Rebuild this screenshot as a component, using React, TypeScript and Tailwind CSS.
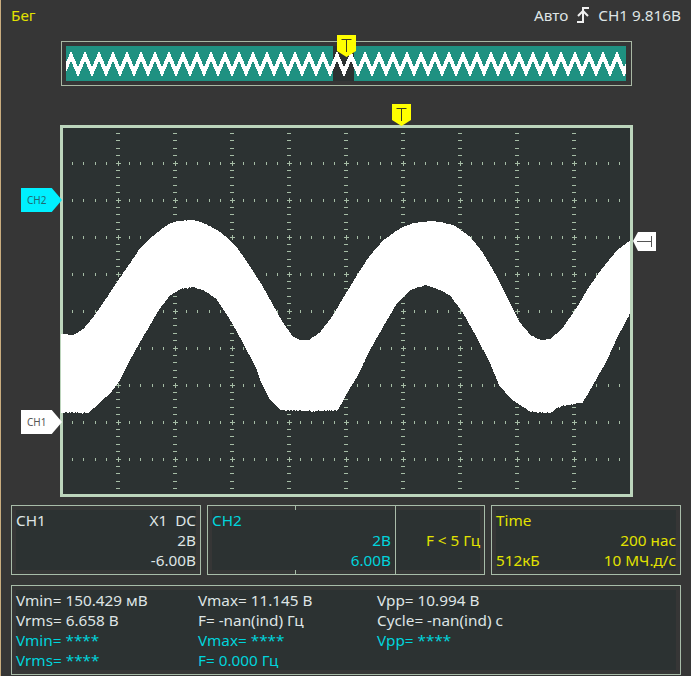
const FONT = "font-['Noto_Sans','Open_Sans',sans-serif]";

const UPPER: [number, number][] = [
  [61, 334], [73, 335], [83, 329], [93, 317], [103, 303], [113, 288], [123, 273], [132, 260], [140, 248], [150, 238],
  [160, 230], [170, 223], [177, 221], [193, 220], [203, 223], [217, 230], [227, 238], [237, 248], [247, 262], [263, 287],
  [273, 305], [283, 323], [293, 337], [300, 340], [308, 340], [320, 332], [333, 315], [343, 298], [357, 275], [370, 255],
  [383, 240], [400, 228], [413, 223], [430, 221], [440, 222], [453, 225], [470, 237], [483, 253], [497, 277], [507, 297],
  [520, 323], [530, 335], [540, 340], [550, 339], [563, 327], [577, 307], [590, 285], [603, 267], [617, 250], [630, 240],
];

const LOWER: [number, number][] = [
  [61, 413], [88, 413], [97, 405], [110, 393], [120, 380], [130, 360], [140, 342], [150, 325], [160, 308], [170, 295],
  [180, 289], [192, 287], [203, 290], [217, 300], [230, 320], [243, 343], [257, 370], [260, 380], [270, 400], [280, 410],
  [310, 411], [338, 410], [347, 393], [357, 377], [370, 350], [383, 327], [397, 303], [410, 290], [425, 285], [440, 290],
  [450, 296], [463, 313], [477, 338], [490, 363], [500, 387], [512, 400], [530, 412], [550, 413], [558, 407], [583, 402],
  [593, 385], [607, 360], [620, 332], [630, 314],
];

function interp(points: [number, number][], x: number) {
  for (let i = 1; i < points.length; i++) {
    if (x <= points[i][0]) {
      const [x0, y0] = points[i - 1];
      const [x1, y1] = points[i];
      return y0 + ((y1 - y0) * (x - x0)) / (x1 - x0);
    }
  }
  return points[points.length - 1][1];
}

function noise(x: number) {
  const v = Math.sin(x * 12.9898) * 43758.5453;
  return v - Math.floor(v) - 0.5;
}

function wavePoints() {
  const top: string[] = [];
  const bottom: string[] = [];
  for (let x = 61; x <= 630; x++) {
    const low = interp(LOWER, x);
    const flat = Math.abs(interp(LOWER, x + 1) - low) < 0.2;
    top.push(`${x},${Math.round(interp(UPPER, x) + noise(x) * 0.4)}`);
    bottom.unshift(`${x},${Math.round(low + noise(x + 7) * (flat ? 1.6 : 0.4))}`);
  }
  return [...top, ...bottom].join(" ");
}

function miniWave() {
  const pts: string[] = [];
  for (let x = 57; x <= 635; x += 7) {
    pts.push(`${x},${(x - 57) % 14 === 0 ? 56 : 72}`);
  }
  return pts.join(" ");
}

const COLUMNS = [118, 175, 232, 289, 346, 403, 460, 517, 574];
const ROWS = [163, 200, 237, 274, 311, 348, 385, 422, 459];

function Grid() {
  const marks = [];
  for (const y of ROWS) {
    for (let x = 72; x < 630; x += 11.4) {
      marks.push(<rect key={`t${y}-${x}`} x={Math.round(x)} y={y - 1} width="1" height="3" />);
    }
  }
  for (const x of COLUMNS) {
    for (let y = 133; y < 494; y += 7.4) {
      marks.push(<rect key={`d${x}-${y}`} x={x - 2} y={Math.round(y)} width="4" height="1" />);
    }
    for (const y of ROWS) {
      marks.push(<rect key={`c${x}-${y}`} x={x - 2} y={y} width="5" height="1" />);
      marks.push(<rect key={`v${x}-${y}`} x={x} y={y - 2} width="1" height="5" />);
    }
  }
  return <g fill="#a6bda6">{marks}</g>;
}

function TMarker({ className }: { className: string }) {
  return (
    <svg className={className} width="19" height="22" viewBox="0 0 19 22">
      <polygon points="0,0 19,0 19,16 9.5,22 0,16" fill="#ffff00" />
      <path d="M4.5 4.5H14.5M9.5 4.5V17" stroke="#3a3a20" strokeWidth="1" fill="none" />
    </svg>
  );
}

function ChannelFlag({ label, className }: { label: string; className: string }) {
  return (
    <div
      className={`absolute -left-[42px] flex h-[24px] w-[41px] items-center pl-[6px] text-[10px] [clip-path:polygon(0_0,75%_0,100%_50%,75%_100%,0_100%)] ${className}`}
    >
      {label}
    </div>
  );
}

function InfoPanel({ children, className }: { children: React.ReactNode; className: string }) {
  return (
    <div className={`border border-[#a9bca9] p-[4px] ${className}`}>
      <div className="h-full bg-[#2c3232] leading-[20px]">{children}</div>
    </div>
  );
}

export default function App() {
  return (
    <div className={`h-[676px] w-[691px] overflow-hidden border-l border-[#c9ad7f] bg-[#363636] text-[15.3px] text-[#dfe5e5] ${FONT}`}>
      <header className="flex h-[30px] items-center justify-between pr-[10px] pl-[10px]">
        <span className="text-[#e2e200]">Бег</span>
        <div className="flex items-center gap-[8px]">
          <span>Авто</span>
          <svg width="14" height="18" viewBox="0 0 14 18" fill="none" stroke="#f0f0f0" strokeWidth="2">
            <path d="M1 16H7V2H13" />
            <path d="M2 10L7 5L12 10" />
          </svg>
          <span>CH1 9.816В</span>
        </div>
      </header>

      <div className="relative mt-[11px] ml-[60px] h-[45px] w-[571px] border border-[#a9b8a4] p-[4px]">
        <svg className="block" width="560" height="35" viewBox="66 46 560 35" shapeRendering="crispEdges">
          <rect x="66" y="46" width="560" height="35" fill="#1f9181" />
          <rect x="333" y="46" width="21" height="35" fill="#2c3232" />
          <polyline points={miniWave()} fill="none" stroke="#ffffff" strokeWidth="4" />
        </svg>
        <TMarker className="absolute top-[-7px] left-[275px]" />
      </div>

      <div className="relative mt-[39px] ml-[59px] h-[372px] w-[573px] border-[3px] border-[#bcd5bc] bg-[#2c3232]">
        <svg
          className="absolute -top-[3px] -left-[3px]"
          width="573"
          height="372"
          viewBox="60 125 573 372"
          shapeRendering="crispEdges"
        >
          <Grid />
          <polygon points={wavePoints()} fill="#ffffff" />
        </svg>
        <TMarker className="absolute top-[-24px] left-[329px]" />
        <ChannelFlag label="CH2" className="top-[60px] bg-[#00f0ff] text-[#1f6a72]" />
        <ChannelFlag label="CH1" className="top-[282px] bg-white text-[#555]" />
        <svg className="absolute top-[104px] -right-[26px]" width="23" height="19" viewBox="0 0 23 19">
          <polygon points="0,9 5,0 23,0 23,19 5,19" fill="#ffffff" />
          <path d="M4 9.5H18M18.5 4V15" stroke="#555" strokeWidth="1" fill="none" />
        </svg>
      </div>

      <div className="mt-[8px] ml-[10px] flex h-[70px] w-[670px] gap-[6px]">
        <InfoPanel className="w-[190px]">
          <div className="flex justify-between">
            <span>CH1</span>
            <span className="whitespace-pre">X1  DC</span>
          </div>
          <div className="text-right">2В</div>
          <div className="text-right">-6.00В</div>
        </InfoPanel>

        <div className="relative flex w-[278px] border border-[#a9bca9] text-[#00d4dc]">
          <div className="flex-1 py-[4px] pl-[4px]">
            <div className="h-full bg-[#2c3232] pr-[4px] leading-[20px]">
              <div>CH2</div>
              <div className="text-right">2В</div>
              <div className="text-right">6.00В</div>
            </div>
          </div>
          <div className="w-[89px] border-l border-[#a9bca9] py-[4px] pr-[4px]">
            <div className="h-full bg-[#2c3232] pt-[20px] text-right leading-[20px] text-[#e2e200]">F &lt; 5 Гц</div>
          </div>
          <span className="absolute top-0 left-[87px] h-[4px] w-px bg-[#a9bca9]" />
          <span className="absolute bottom-0 left-[87px] h-[4px] w-px bg-[#a9bca9]" />
        </div>

        <InfoPanel className="w-[190px] text-[#e2e200]">
          <div>Time</div>
          <div className="text-right">200 нас</div>
          <div className="flex justify-between">
            <span>512кБ</span>
            <span>10 МЧ.д/с</span>
          </div>
        </InfoPanel>
      </div>

      <InfoPanel className="mt-[10px] ml-[10px] h-[90px] w-[670px]">
        <div className="grid grid-cols-[182px_179px_1fr]">
          <div>Vmin= 150.429 мВ</div>
          <div>Vmax= 11.145 В</div>
          <div>Vpp= 10.994 В</div>
          <div>Vrms= 6.658 В</div>
          <div>F= -nan(ind) Гц</div>
          <div>Cycle= -nan(ind) с</div>
          <div className="text-[#00d4dc]">Vmin= ****</div>
          <div className="text-[#00d4dc]">Vmax= ****</div>
          <div className="text-[#00d4dc]">Vpp= ****</div>
          <div className="text-[#00d4dc]">Vrms= ****</div>
          <div className="text-[#00d4dc]">F= 0.000 Гц</div>
        </div>
      </InfoPanel>
    </div>
  );
}
